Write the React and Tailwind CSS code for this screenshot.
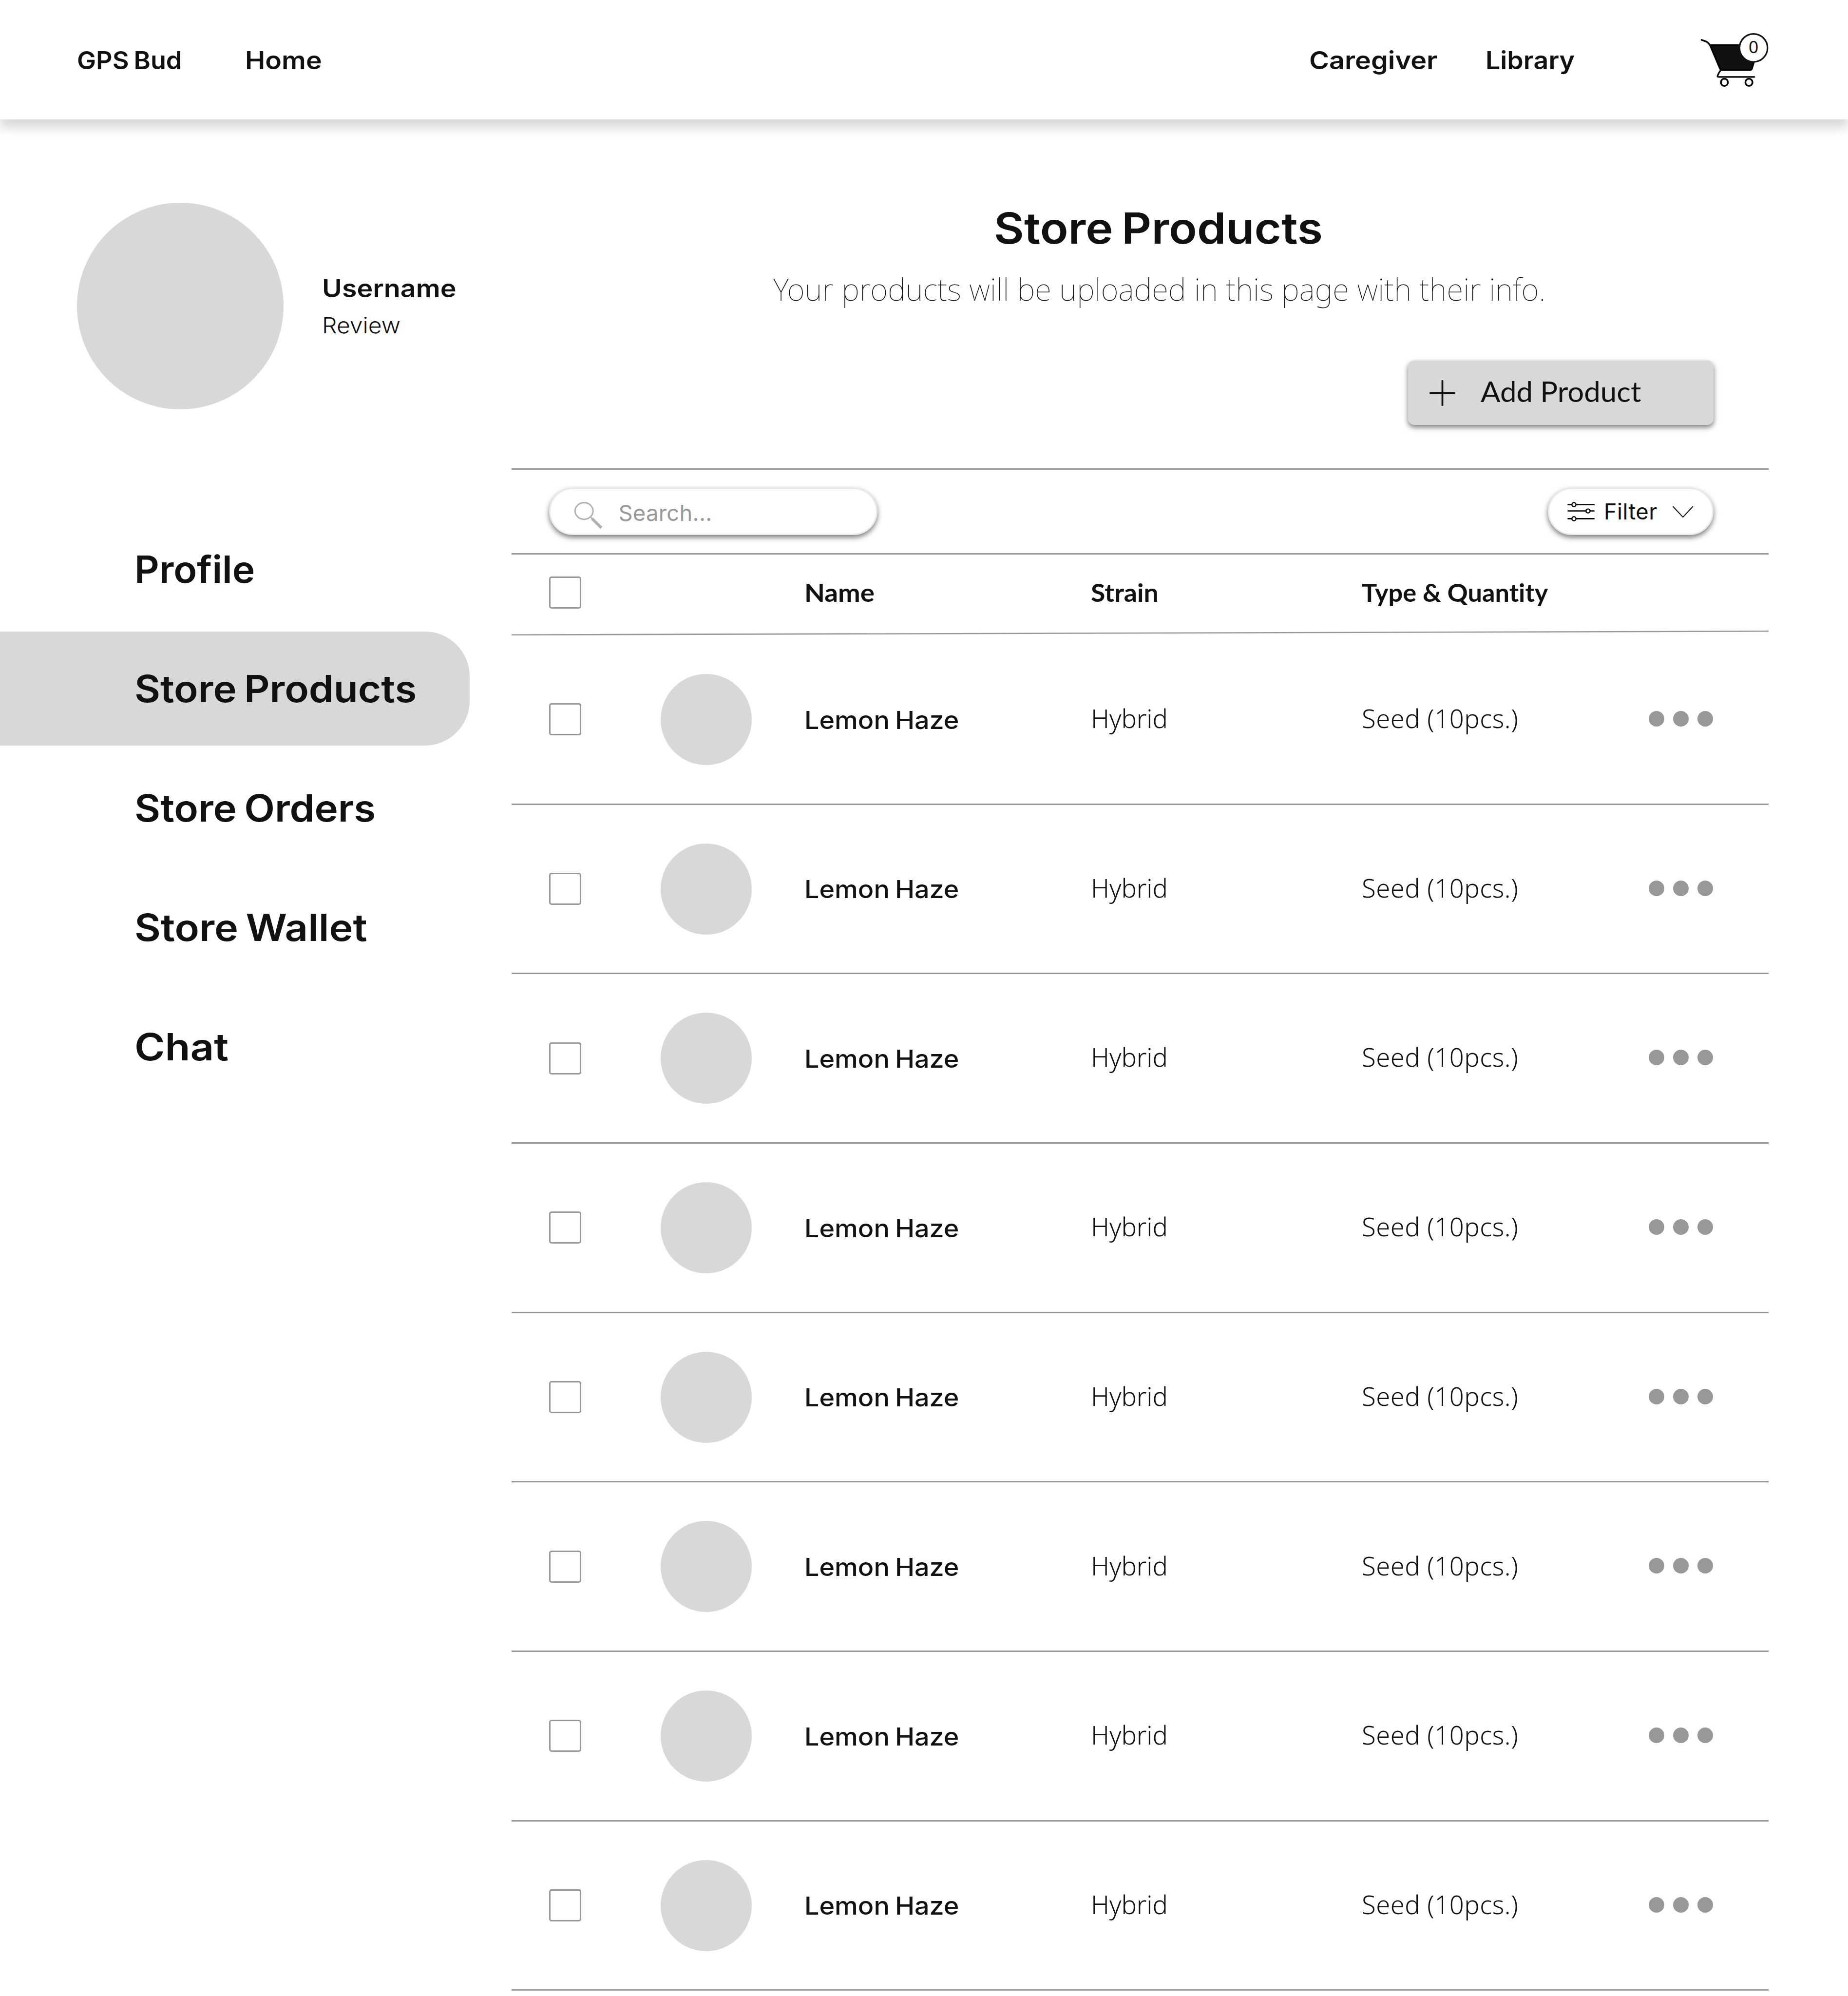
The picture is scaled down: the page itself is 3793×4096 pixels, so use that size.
const NAV_ITEMS = [
  { label: "Profile", stretch: "scale-x-[1.03]" },
  { label: "Store Products", stretch: "scale-x-[1.067]", active: true },
  { label: "Store Orders", stretch: "scale-x-[1.068]" },
  { label: "Store Wallet", stretch: "scale-x-[1.084]" },
  { label: "Chat", stretch: "scale-x-[1.11]" },
];

const PRODUCTS = Array.from({ length: 8 }, (_, id) => ({
  id,
  name: "Lemon Haze",
  strain: "Hybrid",
  quantity: "Seed (10pcs.)",
}));

function CartIcon() {
  return (
    <svg viewBox="0 0 720 480" className="block h-[140.7px] w-[211px]" fill="none">
      <path d="M174 139 H515 L467 304 Q462 313 452 313 H262 Q248 313 243 303 Z" fill="#111" stroke="#000" strokeWidth="12" strokeLinejoin="round" />
      <path d="M114 102 L148 114 Q156 117 174 139" stroke="#000" strokeWidth="12" strokeLinecap="round" />
      <path d="M248 314 Q232 335 226 354 Q224 361 232 361 H484" stroke="#000" strokeWidth="11" strokeLinecap="round" strokeLinejoin="round" />
      <circle cx="274" cy="399" r="25" fill="#fff" stroke="#000" strokeWidth="12" />
      <circle cx="446" cy="399" r="25" fill="#fff" stroke="#000" strokeWidth="12" />
      <circle cx="478" cy="158" r="98" fill="#fff" stroke="#111" strokeWidth="11" />
    </svg>
  );
}

function SearchIcon() {
  return (
    <svg viewBox="222 128 196 190" className="block h-[55.6px] w-[57.4px] shrink-0" fill="none">
      <ellipse cx="289.5" cy="191.5" rx="63" ry="58.5" stroke="#b0b0b0" strokeWidth="10" />
      <path d="M334 238 L342 234 L348 240 L354 240 L418 303 L404 317 L340 254 V247 Z" fill="#b0b0b0" />
    </svg>
  );
}

function SlidersIcon() {
  return (
    <svg viewBox="192 160 192 140" className="block h-[41px] w-[56.2px] shrink-0" fill="#fff" stroke="#000" strokeWidth="9" strokeLinecap="round">
      <path d="M197 182 H379 M197 226.500 H379 M197 281 H379" />
      <circle cx="238" cy="182" r="14" strokeWidth="8.500" />
      <circle cx="337" cy="226.500" r="14" strokeWidth="8.500" />
      <circle cx="238" cy="281" r="14" strokeWidth="8.500" />
    </svg>
  );
}

function ChevronIcon() {
  return (
    <svg viewBox="931 188 145 84" className="block h-[24.6px] w-[42.4px] shrink-0" fill="none" stroke="#111" strokeWidth="7" strokeLinecap="round" strokeLinejoin="round">
      <path d="M935 194 L1003.500 267 L1072 194" />
    </svg>
  );
}

function PlusIcon() {
  return (
    <svg viewBox="0 0 60 60" className="block size-[53px] shrink-0" stroke="#111" strokeWidth="4.200" strokeLinecap="round">
      <path d="M2 30 H58 M30 2 V58" />
    </svg>
  );
}

function Checkbox() {
  return <span className="block size-[66px] rounded-[5px] border-[3px] border-[#989898]" />;
}

function Header() {
  return (
    <header className="flex h-[245px] items-center bg-white pr-[123px] pl-[158px] text-[50.6px] leading-none font-semibold whitespace-nowrap shadow-[0_17px_22px_rgba(0,0,0,0.16)]">
      <span className="w-[345px] origin-left scale-x-[1.03] pt-[3px] [word-spacing:-3px]">GPS Bud</span>
      <span className="origin-left scale-x-[1.095] pt-[3px]">Home</span>
      <span className="ml-auto w-[362px] origin-left scale-x-[1.102] pt-[3px]">Caregiver</span>
      <span className="w-[410.5px] origin-left scale-x-[1.06] pt-[3px]">Library</span>
      <div className="relative">
        <CartIcon />
        <span className="absolute top-[19px] left-[115px] w-[50px] text-center font-['Noto_Sans',sans-serif] text-[35.4px] leading-[48px] font-normal">0</span>
      </div>
    </header>
  );
}

function Sidebar() {
  return (
    <aside className="w-[1049.5px] shrink-0 pt-[171px]">
      <div className="flex items-center gap-[79px] pl-[158px]">
        <div className="size-[424px] rounded-full bg-[#d8d8d8]" />
        <div className="pt-1 leading-[76px]">
          <div className="origin-left scale-x-[1.098] text-[50.6px] font-semibold">Username</div>
          <div className="origin-left scale-x-[1.06] text-[45.4px] font-light">Review</div>
        </div>
      </div>
      <nav className="mt-[211px] flex flex-col gap-[11px]">
        {NAV_ITEMS.map(({ label, stretch, active }) => (
          <div
            key={label}
            className={`flex h-[234px] w-[964px] items-center rounded-r-[92px] pl-[276px] text-[76.5px] leading-none font-semibold [word-spacing:-5px] ${active ? "bg-[#d8d8d8]" : ""}`}
          >
            <span className={`origin-left ${stretch}`}>{label}</span>
          </div>
        ))}
      </nav>
    </aside>
  );
}

function Toolbar() {
  return (
    <div className="flex h-[174px] items-center justify-between border-t-[3px] border-[#989898] pr-[113.5px] pl-[77.5px]">
      <div className="flex h-[97px] w-[674px] items-center gap-[33px] rounded-full border-[3px] border-[#eaeaea] bg-white pl-[49px] shadow-[0_5px_10.5px_rgba(0,0,0,0.52)]">
        <div className="pt-4">
          <SearchIcon />
        </div>
        <span className="pt-1.5 text-[45.4px] leading-none tracking-[0.26px] text-[#989898]">Search...</span>
      </div>
      <div className="flex h-[97px] w-[340px] items-center rounded-full border-[3px] border-[#eaeaea] bg-white pr-[38px] pl-[37px] shadow-[0_5px_10.5px_rgba(0,0,0,0.52)]">
        <SlidersIcon />
        <span className="ml-[19px] text-[45.4px] leading-none tracking-[0.45px]">Filter</span>
        <div className="ml-auto">
          <ChevronIcon />
        </div>
      </div>
    </div>
  );
}

function TableHead() {
  return (
    <div className="h-[168.6px] border-t-[3px] border-[#989898]">
      <div className="grid h-[155.5px] grid-cols-[229px_295px_588px_556px_589px_auto] items-center pl-[77.5px] font-['Lato',sans-serif] text-[50.8px] leading-none font-bold [font-variant-ligatures:none]">
        <Checkbox />
        <span />
        <span className="origin-left scale-x-[1.075]">Name</span>
        <span className="origin-left scale-x-[1.055]">Strain</span>
        <span className="origin-left scale-x-[1.03]">Type &amp; Quantity</span>
      </div>
      <svg viewBox="0 0 2581 10.1" className="block h-[10.1px] w-full" preserveAspectRatio="none">
        <path d="M0 7.500 L2581 0 V2.600 L0 10.100 Z" fill="#989898" />
      </svg>
    </div>
  );
}

function ProductRow({ name, strain, quantity }) {
  return (
    <div className="grid h-[347.7px] grid-cols-[229px_295px_588px_556px_589px_auto] items-center border-b-[3px] border-[#989898] pl-[77.5px] leading-none">
      <Checkbox />
      <span className="block size-[187px] rounded-full bg-[#d8d8d8]" />
      <span className="origin-left scale-x-[1.064] pt-[3px] text-[50.6px] font-medium [word-spacing:-3px]">{name}</span>
      <span className="pb-1 font-['Noto_Sans',sans-serif] text-[52.5px] font-[350] tracking-[-0.1px]">{strain}</span>
      <span className="pb-1 font-['Noto_Sans',sans-serif] text-[52.5px] font-[350] tracking-[0.5px]">{quantity}</span>
      <div className="flex gap-[18px] pb-[3px]">
        <span className="size-8 rounded-full bg-[#989898]" />
        <span className="size-8 rounded-full bg-[#989898]" />
        <span className="size-8 rounded-full bg-[#989898]" />
      </div>
    </div>
  );
}

export default function App() {
  return (
    <div className="h-[4096px] w-[3793px] overflow-hidden bg-white font-['Inter',sans-serif] text-[#111]">
      <Header />
      <div className="flex">
        <Sidebar />
        <main className="w-[2580.5px] pt-[168px]">
          <div className="pl-[79px] text-center">
            <h1 className="scale-x-[1.075] pr-1 text-[88.5px] leading-[110px] font-semibold [word-spacing:-6px]">Store Products</h1>
            <p className="mt-[25px] pl-px font-['Noto_Sans',sans-serif] text-[62.3px] leading-[90px] font-thin tracking-[0.17px]">
              Your products will be uploaded in this page with their info.
            </p>
          </div>
          <div className="mt-[102px] mb-[89.4px] flex justify-end pr-[113.5px]">
            <button className="flex h-[132px] w-[627px] items-center gap-[52px] rounded-[13px] bg-[#d8d8d8] pl-[44.5px] shadow-[0_5px_10.5px_rgba(0,0,0,0.52)]">
              <PlusIcon />
              <span className="origin-left scale-x-[1.044] pb-1.5 font-['Lato',sans-serif] text-[57.4px] leading-none font-normal">Add Product</span>
            </button>
          </div>
          <Toolbar />
          <TableHead />
          {PRODUCTS.map((product) => (
            <ProductRow key={product.id} {...product} />
          ))}
        </main>
      </div>
    </div>
  );
}
